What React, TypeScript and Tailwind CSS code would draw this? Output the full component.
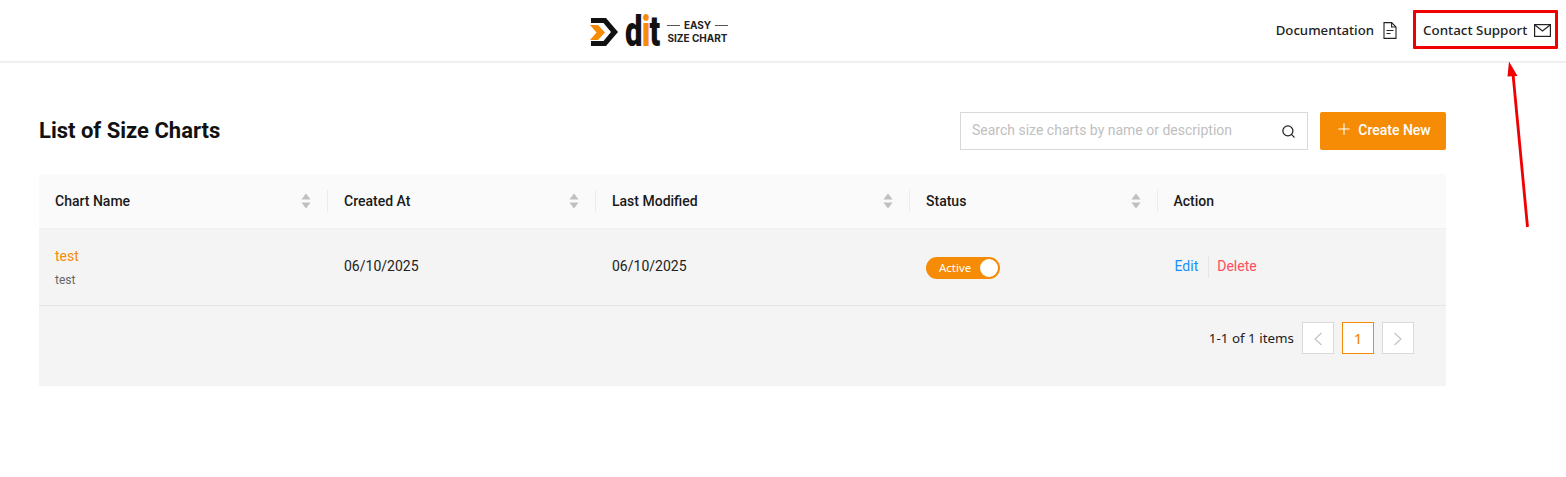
import { Search, Plus } from 'lucide-react';

const columns = ['Chart Name', 'Created At', 'Last Modified', 'Status'];
const gridCols = 'grid grid-cols-[289px_268px_314px_247.5px_1fr]';

function SortIcon() {
  return (
    <svg width="10" height="16" viewBox="0 0 10 16" className="text-[#bfbfbf]" fill="currentColor">
      <path d="M5 0.5 L9.6 6.5 H0.4 Z" />
      <path d="M5 15.5 L9.6 9.5 H0.4 Z" />
    </svg>
  );
}

function Logo() {
  return (
    <div className="flex items-center">
      <svg width="31" height="30" viewBox="0 0 31 30">
        <path d="M1 1 H16 L28 15 L16 29 H1 V24 H13.5 L21 15 L13.5 6 H1 Z" fill="#111" />
        <path d="M0 8 H8 L15 15.5 L8 23 H0 L6.5 15.5 Z" fill="#f68b05" />
      </svg>
      <div className="ml-[4px] flex h-[34px] w-[36px] origin-left scale-x-[0.74] items-end font-['Roboto',sans-serif] text-[42px] leading-[34px] font-black tracking-[-1px] text-[#111]">
        d<span className="text-[#f68b05]">i</span>t
      </div>
      <div className="ml-[6px] flex w-[61px] flex-col items-center font-['Inter',sans-serif] text-[10px] leading-[13px] font-bold text-[#222]">
        <div className="flex items-center gap-[4px]">
          <span className="h-[1.5px] w-[13px] bg-[#555]" />
          EASY
          <span className="h-[1.5px] w-[13px] bg-[#555]" />
        </div>
        <div className="whitespace-nowrap">SIZE CHART</div>
      </div>
    </div>
  );
}

function DocIcon() {
  return (
    <svg width="14" height="17" viewBox="0 0 14 17" fill="none" stroke="#222" strokeWidth="1.1">
      <path d="M1 .6 H8.6 L13 5 V16.4 H1 Z" />
      <path d="M8.6 .6 V5 H13" />
      <path d="M3.5 8.5 H10.5 M3.5 11.5 H7.5" />
    </svg>
  );
}

function MailIcon() {
  return (
    <svg width="17" height="13" viewBox="0 0 17 13" fill="none" stroke="#222" strokeWidth="1.2">
      <rect x=".6" y=".6" width="15.8" height="11.8" />
      <path d="M.6 .8 L8.5 7 L16.4 .8" />
    </svg>
  );
}

function Chevron({ left }: { left?: boolean }) {
  return (
    <svg width="10" height="14" viewBox="0 0 10 14" fill="none" stroke="#c4c4c4" strokeWidth="1.2">
      <path d={left ? 'M8.5 1 L2 7 L8.5 13' : 'M1.5 1 L8 7 L1.5 13'} />
    </svg>
  );
}

export default function App() {
  return (
    <div className="relative h-[477px] overflow-hidden bg-white font-['Roboto',sans-serif] text-[14px] text-[#222]">
      <header className="relative flex h-[63px] items-center justify-end border-b-2 border-[#f0f0f0] pr-[8px]">
        <div className="absolute top-[15px] left-[590px]">
          <Logo />
        </div>
        <a className="mr-[16px] flex items-center gap-[9px] font-['Noto_Sans',sans-serif] text-[13.2px] font-medium text-[#222]">
          Documentation
          <DocIcon />
        </a>
        <a className="mb-[3px] flex h-[39px] w-[145px] items-center justify-between rounded-[1px] border-[3px] border-[#f00000] pt-[2px] pr-[4px] pl-[7px] font-['Noto_Sans',sans-serif] text-[13.4px] font-medium text-[#222]">
          Contact Support
          <MailIcon />
        </a>
      </header>

      <main className="mr-[120px] ml-[39px]">
        <div className="mt-[49px] mb-[24px] flex h-[38px] items-center justify-between">
          <h1 className="pb-[2px] text-[22px] font-bold text-[#111]">List of Size Charts</h1>
          <div className="flex items-center gap-[12px]">
            <div className="flex h-[38px] w-[348px] items-center justify-between border border-[#d9d9d9] bg-white pr-[11px] pb-[2px] pl-[11px]">
              <span className="text-[14px] text-[#bfbfbf]">Search size charts by name or description</span>
              <Search size={15} strokeWidth={2} className="mt-[2px] text-[#222]" />
            </div>
            <button className="flex h-[38px] w-[126px] items-center justify-center gap-[5px] rounded-[2px] bg-[#f68b05] pb-[2px] text-[14px] font-medium text-white">
              <Plus size={18} strokeWidth={1.5} className="mb-[3px]" />
              Create New
            </button>
          </div>
        </div>

        <div className="bg-[#f4f4f4]">
          <div className={`${gridCols} h-[55px] border-b border-[#f0f0f0] bg-[#fafafa] font-bold`}>
            {columns.map((name) => (
              <div key={name} className="flex items-center pl-[16px]">
                <span className="flex-1 font-medium text-[#1a1a1a]">{name}</span>
                <SortIcon />
                <span className="ml-[16px] h-[22px] w-px bg-[#ececec]" />
              </div>
            ))}
            <div className="flex items-center pl-[16px] font-medium text-[#1a1a1a]">Action</div>
          </div>

          <div className={`${gridCols} h-[77px] items-center border-b border-[#e4e4e4]`}>
            <div className="pt-[2px] pl-[16px]">
              <div className="text-[14px] leading-[22px] text-[#f68b05]">test</div>
              <div className="mt-[2px] text-[12px] leading-[22px] text-[#666]">test</div>
            </div>
            <div className="pb-[1px] pl-[16px]">06/10/2025</div>
            <div className="pb-[1px] pl-[16px]">06/10/2025</div>
            <div className="pt-[2px] pl-[16px]">
              <div className="flex h-[22px] w-[74px] items-center justify-between rounded-full bg-[#f68b05] pr-[2px] pl-[13px] font-['Noto_Sans',sans-serif] text-[11.5px] text-white">
                Active
                <span className="h-[18px] w-[18px] rounded-full bg-white" />
              </div>
            </div>
            <div className="flex items-center pb-[1px] pl-[17px]">
              <span className="text-[#1890ff]">Edit</span>
              <span className="mr-[8px] ml-[10px] h-[22px] w-px bg-[#e4e4e4]" />
              <span className="text-[#ff4d5e]">Delete</span>
            </div>
          </div>

          <div className="flex h-[80px] justify-end pt-[16px] pr-[32px]">
            <div className="flex h-[32px] items-center gap-[8px] font-['Noto_Sans',sans-serif]">
              <span className="text-[13.4px] text-[#222]">1-1 of 1 items</span>
              <span className="flex h-[32px] w-[32px] items-center justify-center border border-[#d9d9d9] bg-white pt-[2px]">
                <Chevron left />
              </span>
              <span className="flex h-[32px] w-[32px] items-center justify-center border border-[#f68b05] bg-white text-[14px] font-medium text-[#f68b05]">
                1
              </span>
              <span className="flex h-[32px] w-[32px] items-center justify-center border border-[#d9d9d9] bg-white pt-[2px]">
                <Chevron />
              </span>
            </div>
          </div>
        </div>
      </main>

      <svg className="absolute top-[60px] left-[1500px]" width="36" height="170" viewBox="0 0 36 170">
        <path d="M27.5 167 L13 14" stroke="#f00000" strokeWidth="2.8" fill="none" />
        <path d="M9 1.5 L17.5 16 L7.5 16.5 Z" fill="#f00000" />
      </svg>
    </div>
  );
}
